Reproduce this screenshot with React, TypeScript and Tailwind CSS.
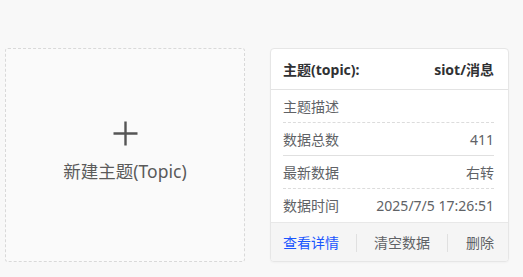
export default function App() {
  const rows: { label: string; value: string; line: 'dashed' | 'solid' | 'none' }[] = [
    { label: '主题描述', value: '', line: 'dashed' },
    { label: '数据总数', value: '411', line: 'solid' },
    { label: '最新数据', value: '右转', line: 'dashed' },
    { label: '数据时间', value: '2025/7/5 17:26:51', line: 'none' },
  ];

  return (
    <div className="w-[523px] h-[277px] bg-[#f8f8f8] font-['Noto_Sans','Noto_Sans_CJK_SC',sans-serif] flex gap-[25px] pl-[5px] pt-[48px]">
      {/* new topic card */}
      <div className="w-[240px] h-[214px] border border-dashed border-[#d9d9d9] rounded-[3px] bg-[#fafafa] flex flex-col items-center justify-center text-[#555]">
        <svg width="25" height="25" viewBox="0 0 25 25">
          <path d="M12.5 0.5v24M0.5 12.5h24" stroke="#555" strokeWidth="2.4" />
        </svg>
        <div className="mt-[15px] mb-[9px] text-[17.5px] leading-[20px] text-[#5a5a5a]">新建主题(Topic)</div>
      </div>

      {/* topic card */}
      <div className="w-[239px] h-[214px] bg-white border border-[#e6e6e6] rounded-[4px] flex flex-col overflow-hidden shadow-[0_1px_2px_rgba(0,0,0,0.03)]">
        <div className="h-[41px] shrink-0 flex items-center justify-between pl-[12px] pr-[14px] border-b border-[#e3e3e3] text-[14px] font-bold text-[#303133]">
          <span>主题(topic):</span>
          <span>siot/消息</span>
        </div>
        <div className="flex-1 px-[12px] pr-[14px]">
          {rows.map((r) => (
            <div
              key={r.label}
              className={
                'h-[33px] flex items-center justify-between text-[14px] text-[#606266] ' +
                (r.line === 'dashed'
                  ? 'border-b border-dashed border-[#dcdcdc]'
                  : r.line === 'solid'
                  ? 'border-b border-[#e0e0e0]'
                  : '')
              }
            >
              <span>{r.label}</span>
              <span>{r.value}</span>
            </div>
          ))}
        </div>
        <div className="h-[40px] shrink-0 bg-[#f5f5f5] border-t border-[#e8e8e8] flex items-center pl-[12px] pr-[14px] text-[14px] text-[#606266]">
          <span className="text-[#1a56ff]">查看详情</span>
          <span className="ml-[17px] w-[1px] h-[18px] bg-[#e0e0e0]" />
          <span className="ml-[17px]">清空数据</span>
          <span className="ml-[17px] w-[1px] h-[18px] bg-[#e0e0e0]" />
          <span className="ml-auto">删除</span>
        </div>
      </div>
    </div>
  );
}
